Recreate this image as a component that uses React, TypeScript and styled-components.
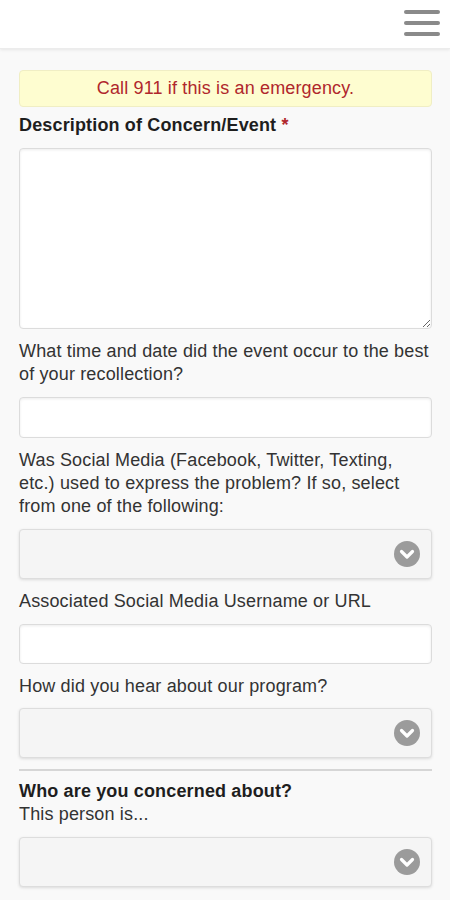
import styled, { createGlobalStyle } from "styled-components";

const GlobalStyle = createGlobalStyle`
  html, body {
    margin: 0;
    padding: 0;
    background-color: #f9f9f9;
    font-family: "Liberation Sans", Arial, sans-serif;
  }
`;

const Page = styled.div`
  min-height: 900px;
  background-color: #f9f9f9;
`;

const TopBar = styled.header`
  height: 48px;
  background-color: #ffffff;
  display: flex;
  align-items: center;
  justify-content: flex-end;
  padding-right: 10px;
  box-shadow: 0 1px 3px rgba(0, 0, 0, 0.08);
  border-bottom: 1px solid #ececec;
`;

const MenuButton = styled.button`
  width: 36px;
  height: 26px;
  padding: 0;
  border: 0;
  background: transparent;
  display: flex;
  flex-direction: column;
  justify-content: space-between;
  margin-top: -2px;
  cursor: pointer;
`;

const MenuLine = styled.span`
  display: block;
  height: 4px;
  border-radius: 2px;
  background-color: #8a8a8a;
`;

const Content = styled.main`
  padding: 21px 18px 0 19px;
`;

const Alert = styled.div`
  height: 37px;
  box-sizing: border-box;
  display: flex;
  align-items: center;
  justify-content: center;
  background-color: #fefdd0;
  border: 1px solid #f0eec4;
  border-radius: 4px;
  color: #b0272c;
  font-size: 18px;
  letter-spacing: 0.15px;
  margin-bottom: 7px;
`;

const Label = styled.label<{ $bold?: boolean; $gap?: number }>`
  display: block;
  font-size: 18px;
  line-height: 23px;
  letter-spacing: 0.15px;
  color: ${(p) => (p.$bold ? "#1e1e1e" : "#333333")};
  font-weight: ${(p) => (p.$bold ? 700 : 400)};
  margin-bottom: ${(p) => (p.$gap ?? 11)}px;
`;

const Required = styled.span`
  color: #b0272c;
`;

const TextArea = styled.textarea`
  display: block;
  width: 100%;
  height: 181px;
  box-sizing: border-box;
  margin: 0 0 11px;
  border: 1px solid #dcdcdc;
  border-radius: 4px;
  background: #ffffff;
  box-shadow: inset 0 1px 3px rgba(0, 0, 0, 0.08);
  resize: vertical;
  font: inherit;
`;

const TextInput = styled.input<{ $h?: number }>`
  display: block;
  width: 100%;
  height: ${(p) => p.$h ?? 41}px;
  box-sizing: border-box;
  margin: 0 0 11px;
  border: 1px solid #dcdcdc;
  border-radius: 4px;
  background: #ffffff;
  box-shadow: inset 0 1px 3px rgba(0, 0, 0, 0.08);
  font: inherit;
`;

const SelectBox = styled.div`
  height: 50px;
  box-sizing: border-box;
  margin-bottom: 11px;
  display: flex;
  align-items: center;
  justify-content: flex-end;
  padding-right: 11px;
  background-color: #f5f5f5;
  border: 1px solid #dddddd;
  border-radius: 4px;
  box-shadow: 0 1px 3px rgba(0, 0, 0, 0.12);
`;

const Divider = styled.hr`
  border: 0;
  border-top: 2px solid #d6d6d6;
  margin: 0 0 9px;
`;

function ChevronCircle() {
  return (
    <svg width="26" height="26" viewBox="0 0 26 26">
      <circle cx="13" cy="13" r="13" fill="#9b9b9b" />
      <path
        d="M7.5 10.5 L13 16 L18.5 10.5"
        fill="none"
        stroke="#ffffff"
        strokeWidth="3.2"
        strokeLinecap="round"
        strokeLinejoin="round"
      />
    </svg>
  );
}

function Select() {
  return (
    <SelectBox>
      <ChevronCircle />
    </SelectBox>
  );
}

export default function App() {
  return (
    <Page>
      <GlobalStyle />
      <TopBar>
        <MenuButton aria-label="Menu">
          <MenuLine />
          <MenuLine />
          <MenuLine />
        </MenuButton>
      </TopBar>
      <Content>
        <Alert>Call 911 if this is an emergency.</Alert>
        <Label $bold>
          Description of Concern/Event <Required>*</Required>
        </Label>
        <TextArea />
        <Label>What time and date did the event occur to the best of your recollection?</Label>
        <TextInput />
        <Label>
          Was Social Media (Facebook, Twitter, Texting, etc.) used to express the problem? If so,
          select from one of the following:
        </Label>
        <Select />
        <Label>Associated Social Media Username or URL</Label>
        <TextInput $h={40} />
        <Label $gap={10}>How did you hear about our program?</Label>
        <Select />
        <Divider />
        <Label $bold $gap={0}>
          Who are you concerned about?
        </Label>
        <Label>This person is...</Label>
        <Select />
      </Content>
    </Page>
  );
}
